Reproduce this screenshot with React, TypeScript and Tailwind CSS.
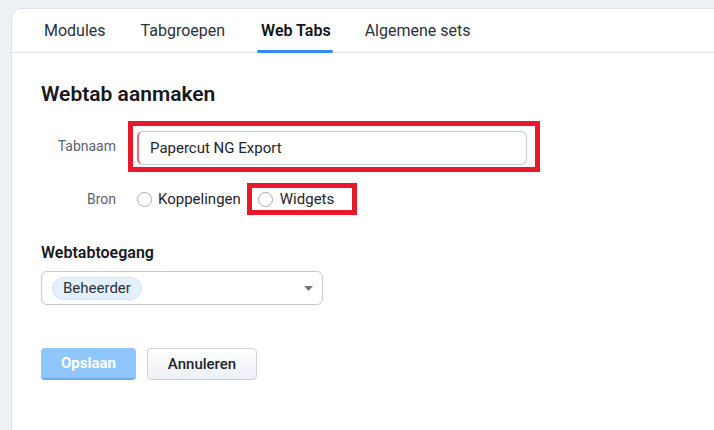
const tabs = [
  { label: "Modules", ml: "ml-0" },
  { label: "Tabgroepen", ml: "ml-[35px]" },
  { label: "Web Tabs", ml: "ml-[36px]" },
  { label: "Algemene sets", ml: "ml-[34px]" },
];

const Radio = () => (
  <span className="inline-block h-[15px] w-[15px] shrink-0 rounded-full border-[1.5px] border-[#a9aeb7] bg-white" />
);

const App = () => {
  return (
    <div
      className="min-h-[430px] w-[714px] overflow-hidden bg-[#edf0f4] pt-[8px] pl-[11px]"
      style={{ fontFamily: "Roboto, 'Liberation Sans', sans-serif" }}
    >
      <div className="min-h-[422px] w-[720px] rounded-tl-[10px] border-t border-l border-[#dbe2ec] bg-white">
        {/* tabs */}
        <div className="flex h-[44px] items-center border-b border-[#dde3ec] pl-[32px]">
          {tabs.map((t) => {
            const active = t.label === "Web Tabs";
            return (
              <div key={t.label} className={`relative flex h-full items-center ${t.ml}`}>
                <span
                  className={
                    active
                      ? "text-[16px] font-semibold text-[#111318]"
                      : "text-[16px] text-[#2b303b]"
                  }
                >
                  {t.label}
                </span>
                {active && (
                  <span className="absolute right-[-2px] bottom-[-1px] left-[-4px] h-[3px] rounded-full bg-[#2f8cf0]" />
                )}
              </div>
            );
          })}
        </div>

        <div className="pt-[27px] pl-[29px]">
          <h1 className="text-[21px] leading-[28px] font-semibold text-[#16181d]">Webtab aanmaken</h1>

          {/* Tabnaam */}
          <div className="mt-[13px] flex items-center">
            <span className="w-[75px] text-right text-[14px] text-[#5b6272]">Tabnaam</span>
            <div className="ml-[12px] h-[51px] w-[412px] border-[5px] border-[#e8192c] pt-[5px] pl-[4px]">
              <div className="flex h-[34px] w-[390px] items-center rounded-[6px] border border-l-2 border-[#c5c9d2] border-l-[#ef6a6a] pl-[11px] text-[15px] text-[#1f232b]">
                Papercut NG Export
              </div>
            </div>
          </div>

          {/* Bron */}
          <div className="mt-[11px] flex items-center">
            <span className="w-[75px] text-right text-[14px] text-[#5b6272]">Bron</span>
            <div className="ml-[21px] flex items-center gap-[6px]">
              <Radio />
              <span className="text-[15px] text-[#1f232b]">Koppelingen</span>
            </div>
            <div className="ml-[6px] flex h-[32px] w-[110px] items-center gap-[7px] border-[5px] border-[#e8192c] pl-[6px]">
              <Radio />
              <span className="text-[15px] text-[#1f232b]">Widgets</span>
            </div>
          </div>

          {/* Webtabtoegang */}
          <div className="mt-[28px] text-[16px] leading-[20px] font-semibold text-[#16181d]">Webtabtoegang</div>
          <div className="mt-[8px] flex h-[34px] w-[282px] items-center rounded-[6px] border border-[#c5c9d2] pl-[10px]">
            <span className="flex h-[23px] items-center rounded-full border border-[#d3e5f9] bg-[#e4f0fd] px-[10px] text-[15px] text-[#2b303b]">
              Beheerder
            </span>
            <svg className="mr-[9px] ml-auto" width="9" height="5" viewBox="0 0 9 5">
              <path d="M0 0h9L4.5 5z" fill="#737983" />
            </svg>
          </div>

          {/* buttons */}
          <div className="mt-[43px] flex gap-[11px]">
            <button className="h-[32px] w-[95px] rounded-[4px] border-b-2 border-[#6aaef0] bg-[#8fc7fc] text-[15px] font-bold text-white">
              Opslaan
            </button>
            <button className="h-[32px] w-[110px] rounded-[4px] border border-[#cdd2da] bg-gradient-to-b from-white to-[#eceff4] text-[15px] font-medium text-[#1f232b]">
              Annuleren
            </button>
          </div>
        </div>
      </div>
    </div>
  );
};

export default App;
